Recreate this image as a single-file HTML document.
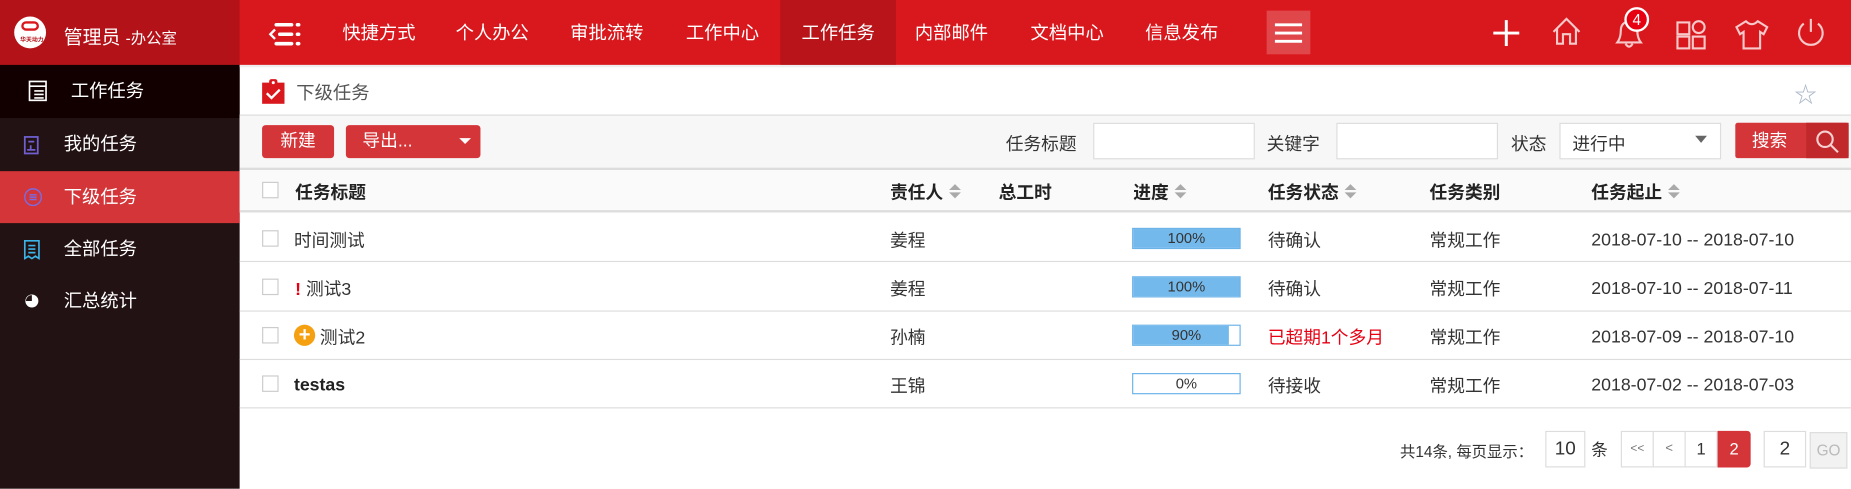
<!DOCTYPE html>
<html><head><meta charset="utf-8">
<style>
*{box-sizing:border-box;margin:0;padding:0}
html,body{width:1851px;height:489px;overflow:hidden;background:#fff}
#w{position:absolute;left:0;top:0;width:1568px;height:414px;transform:scale(1.18048);transform-origin:0 0;font-family:"Liberation Sans","Noto Sans CJK SC",sans-serif;font-size:15px;color:#333}
.a{position:absolute}
.top{left:0;top:0;width:1568px;height:55px;background:#d9181d}
.nav{color:#fff;font-size:15.5px;top:16px}
.side{left:0;top:55px;width:203px;height:359px;background:#231213}
.si{position:absolute;left:0;width:203px;height:44px;color:#fff;font-size:15.5px;line-height:46px;padding-left:54px}
.hd{font-weight:bold;font-size:15px;color:#222;top:152px}
.cb{width:14px;height:14px;border:1px solid #ccc;background:#fff}
.row{left:203px;width:1365px;height:1px;background:#ddd}
.cell{font-size:15px;color:#333}
.dt{margin-top:2px}
.bar{width:92px;height:18px;border:1px solid #6cb3e8;background:#fff;font-size:12.5px;text-align:center;line-height:16px;color:#333}
.bar i{position:absolute;left:0;top:0;bottom:0;background:#74b9ec}
.bar span{position:relative}
.btn{background:#d43539;color:#fff;border-radius:3px;font-size:15px;text-align:center;line-height:28px}
.inp{background:#fff;border:1px solid #ddd;height:31px}
.sort{display:inline-block;width:0;height:0;margin-left:10px;vertical-align:middle;position:relative;top:-2px}
.sort:before{content:"";position:absolute;left:-5px;top:-6px;border:5px solid transparent;border-bottom:5px solid #aaa;border-top:0}
.sort:after{content:"";position:absolute;left:-5px;top:1px;border:5px solid transparent;border-top:5px solid #aaa;border-bottom:0}
.pg{border:1px solid #ddd;background:#fff;height:31px;text-align:center;line-height:29px;font-size:14px}
</style></head><body><div id="w">
<div class="a top"></div>
<div class="a" style="left:0;top:0;width:203px;height:55px;background:#b31218"></div>
<div class="a" style="left:12px;top:14px;width:27px;height:27px;border-radius:50%;background:#fff"></div>
<div class="a" style="left:18px;top:18px;width:15px;height:8px;border:2px solid #d9181d;border-radius:5px"></div>
<div class="a" style="left:17px;top:30px;font-size:5px;color:#b31218;font-weight:bold">华天动力</div>
<div class="a" style="left:54px;top:18px;color:#fff;font-size:16px">管理员 <span style="font-size:13px">-办公室</span></div>
<svg class="a" style="left:227px;top:19px" width="28" height="20"><g stroke="#fff" stroke-width="3" stroke-linecap="round"><line x1="7" y1="2" x2="20" y2="2"/><line x1="25" y1="2" x2="26" y2="2"/><line x1="10" y1="10" x2="20" y2="10"/><line x1="25" y1="10" x2="26" y2="10"/><line x1="7" y1="18" x2="20" y2="18"/><line x1="25" y1="18" x2="26" y2="18"/></g><path d="M6 6 L2 10 L6 14" stroke="#fff" stroke-width="2" fill="none"/></svg>
<div class="a nav" style="left:290px">快捷方式</div>
<div class="a nav" style="left:386px">个人办公</div>
<div class="a nav" style="left:483px">审批流转</div>
<div class="a nav" style="left:581px">工作中心</div>
<div class="a" style="left:661px;top:0;width:98px;height:55px;background:#b8141a"></div>
<div class="a nav" style="left:679px">工作任务</div>
<div class="a nav" style="left:775px">内部邮件</div>
<div class="a nav" style="left:873px">文档中心</div>
<div class="a nav" style="left:970px">信息发布</div>
<div class="a" style="left:1073px;top:9px;width:37px;height:37px;background:#e0474b"></div>
<svg class="a" style="left:1079px;top:19px" width="25" height="18"><g stroke="#fff" stroke-width="2.4"><line x1="1" y1="2" x2="24" y2="2"/><line x1="1" y1="9" x2="24" y2="9"/><line x1="1" y1="16" x2="24" y2="16"/></g></svg>
<svg class="a" style="left:1264px;top:16px" width="24" height="24"><g stroke="#fff" stroke-width="2.5"><line x1="12" y1="1" x2="12" y2="23"/><line x1="1" y1="12" x2="23" y2="12"/></g></svg>
<svg class="a" style="left:1313px;top:13px" width="28" height="28" fill="none" stroke="#f7c9ca" stroke-width="1.8"><path d="M3 14 L14 3 L25 14 M6 11 V24 H11 V16 H17 V24 H22 V11"/></svg>
<svg class="a" style="left:1366px;top:12px" width="28" height="32" fill="none" stroke="#f7c9ca" stroke-width="1.8"><path d="M4 24 Q7 20 7 14 Q7 7 14 6 Q21 7 21 14 Q21 20 24 24 Z M11 25 Q14 30 17 25"/></svg>
<div class="a" style="left:1376px;top:6px;width:21px;height:21px;border-radius:50%;background:#e60012;border:2px solid #fff;color:#fff;font-size:13px;text-align:center;line-height:17px">4</div>
<svg class="a" style="left:1419px;top:13px" width="28" height="30" fill="none" stroke="#f7c9ca" stroke-width="1.8"><rect x="2" y="6" width="10" height="10"/><circle cx="20" cy="10" r="5"/><rect x="2" y="18" width="10" height="10"/><rect x="15" y="18" width="10" height="10"/></svg>
<svg class="a" style="left:1469px;top:13px" width="30" height="30" fill="none" stroke="#f7c9ca" stroke-width="1.8"><path d="M10 5 L2 10 L5 16 L8 14 V28 H22 V14 L25 16 L28 10 L20 5 Q15 10 10 5 Z"/></svg>
<svg class="a" style="left:1520px;top:13px" width="28" height="28" fill="none" stroke="#f7c9ca" stroke-width="1.8"><path d="M8 7 A10 10 0 1 0 20 7"/><line x1="14" y1="3" x2="14" y2="14"/></svg>

<div class="a side"></div>
<div class="si" style="top:55px;height:45px;background:#120000;padding-left:60px;line-height:45px">工作任务</div>
<svg class="a" style="left:24px;top:68px" width="16" height="18" fill="none" stroke="#fff" stroke-width="1.4"><rect x="1" y="1" width="14" height="16"/><line x1="1" y1="5" x2="15" y2="5"/><line x1="5" y1="9" x2="13" y2="9"/><line x1="5" y1="12" x2="13" y2="12"/><line x1="5" y1="15" x2="13" y2="15"/></svg>
<div class="si" style="top:100px">我的任务</div>
<svg class="a" style="left:20px;top:115px" width="13" height="16" fill="none" stroke="#6f5fd0" stroke-width="1.5"><rect x="1" y="1" width="11" height="14"/><line x1="4" y1="5" x2="9" y2="5"/><line x1="6" y1="8" x2="6" y2="12"/><line x1="3" y1="12" x2="10" y2="12"/></svg>
<div class="si" style="top:145px;background:#d43539">下级任务</div>
<svg class="a" style="left:20px;top:159px" width="16" height="16" fill="none" stroke="#7b6be0" stroke-width="1.2"><circle cx="8" cy="8" r="7"/><line x1="5" y1="6" x2="11" y2="6"/><line x1="5" y1="8" x2="11" y2="8"/><line x1="5" y1="10" x2="11" y2="10"/></svg>
<div class="si" style="top:189px">全部任务</div>
<svg class="a" style="left:20px;top:203px" width="14" height="17" fill="none" stroke="#3bb4e8" stroke-width="1.4"><path d="M1 1 H13 V16 L10 14 L7 16 L4 14 L1 16 Z"/><line x1="4" y1="5" x2="10" y2="5"/><line x1="4" y1="8" x2="10" y2="8"/><line x1="4" y1="11" x2="10" y2="11"/></svg>
<div class="si" style="top:233px">汇总统计</div>
<svg class="a" style="left:21px;top:249px" width="12" height="12"><circle cx="6" cy="6" r="5.5" fill="#fff"/><path d="M6 6 V1 A5 5 0 0 0 1 6 Z" fill="#231213"/></svg>

<div class="a" style="left:203px;top:55px;width:1365px;height:2px;background:#eee"></div>
<svg class="a" style="left:222px;top:66px" width="19" height="22"><rect x="0" y="4" width="19" height="18" fill="#d9181d"/><rect x="6" y="1" width="7" height="6" rx="2" fill="#d9181d"/><circle cx="9.5" cy="4" r="1.3" fill="#fff"/><path d="M4 13 L8 17 L15 10" stroke="#fff" stroke-width="2" fill="none"/></svg>
<div class="a" style="left:251px;top:67px;font-size:15.5px;color:#555">下级任务</div>
<div class="a" style="left:1520px;top:66px;font-size:19px;color:#a9b7c8">☆</div>
<div class="a" style="left:203px;top:97px;width:1365px;height:45px;background:#f7f7f7;border-top:1px solid #ddd"></div>
<div class="a btn" style="left:222px;top:106px;width:61px;height:28px">新建</div>
<div class="a btn" style="left:293px;top:106px;width:114px;height:28px;text-align:left;padding-left:14px">导出...</div>
<div class="a" style="left:389px;top:117px;border:5px solid transparent;border-top:5px solid #fff"></div>
<div class="a" style="left:852px;top:111px">任务标题</div>
<div class="a inp" style="left:926px;top:104px;width:137px"></div>
<div class="a" style="left:1073px;top:111px">关键字</div>
<div class="a inp" style="left:1132px;top:104px;width:137px"></div>
<div class="a" style="left:1280px;top:111px">状态</div>
<div class="a inp" style="left:1321px;top:104px;width:137px;padding:6px 0 0 10px">进行中</div>
<div class="a" style="left:1436px;top:115px;border:5px solid transparent;border-top:6px solid #666"></div>
<div class="a btn" style="left:1470px;top:104px;width:96px;height:30px;line-height:32px;text-align:left;padding-left:14px;border-radius:2px">搜索</div>
<div class="a" style="left:1530px;top:104px;width:36px;height:30px;background:#c0282c"></div>
<svg class="a" style="left:1538px;top:110px" width="20" height="20" fill="none" stroke="#f7d0d0" stroke-width="1.8"><circle cx="8" cy="8" r="6.5"/><line x1="13" y1="13" x2="19" y2="19"/></svg>
<div class="a" style="left:203px;top:142px;width:1365px;height:38px;background:#fafafa;border-top:2px solid #ddd;border-bottom:2px solid #ddd"></div>
<div class="a cb" style="left:222px;top:154px"></div>
<div class="a hd" style="left:250px">任务标题</div>
<div class="a hd" style="left:754px">责任人<span class="sort"></span></div>
<div class="a hd" style="left:846px">总工时</div>
<div class="a hd" style="left:960px">进度<span class="sort"></span></div>
<div class="a hd" style="left:1074px">任务状态<span class="sort"></span></div>
<div class="a hd" style="left:1211px">任务类别</div>
<div class="a hd" style="left:1348px">任务起止<span class="sort"></span></div>

<div class="a row" style="top:221px"></div><div class="a row" style="top:263px"></div><div class="a row" style="top:304px"></div><div class="a row" style="top:345px"></div>

<div class="a cb" style="left:222px;top:195px"></div>
<div class="a cell" style="left:249px;top:193px">时间测试</div>
<div class="a cell" style="left:754px;top:193px">姜程</div>
<div class="a bar" style="left:959px;top:193px"><i style="width:100%"></i><span>100%</span></div>
<div class="a cell" style="left:1074px;top:193px">待确认</div>
<div class="a cell" style="left:1211px;top:193px">常规工作</div>
<div class="a cell dt" style="left:1348px;top:193px">2018-07-10 -- 2018-07-10</div>

<div class="a cb" style="left:222px;top:236px"></div>
<div class="a cell" style="left:250px;top:234px"><b style="color:#e60012">!</b> 测试3</div>
<div class="a cell" style="left:754px;top:234px">姜程</div>
<div class="a bar" style="left:959px;top:234px"><i style="width:100%"></i><span>100%</span></div>
<div class="a cell" style="left:1074px;top:234px">待确认</div>
<div class="a cell" style="left:1211px;top:234px">常规工作</div>
<div class="a cell dt" style="left:1348px;top:234px">2018-07-10 -- 2018-07-11</div>

<div class="a cb" style="left:222px;top:277px"></div>
<div class="a" style="left:249px;top:275px;width:18px;height:18px;border-radius:50%;background:#f5a010;color:#fff;font-weight:bold;text-align:center;line-height:18px;font-size:17px">+</div>
<div class="a cell" style="left:271px;top:275px">测试2</div>
<div class="a cell" style="left:754px;top:275px">孙楠</div>
<div class="a bar" style="left:959px;top:275px"><i style="width:90%"></i><span>90%</span></div>
<div class="a cell" style="left:1074px;top:275px;color:#e60012">已超期1个多月</div>
<div class="a cell" style="left:1211px;top:275px">常规工作</div>
<div class="a cell dt" style="left:1348px;top:275px">2018-07-09 -- 2018-07-10</div>

<div class="a cb" style="left:222px;top:318px"></div>
<div class="a cell dt" style="left:249px;top:316px;font-weight:bold;color:#222">testas</div>
<div class="a cell" style="left:754px;top:316px">王锦</div>
<div class="a bar" style="left:959px;top:316px"><span>0%</span></div>
<div class="a cell" style="left:1074px;top:316px">待接收</div>
<div class="a cell" style="left:1211px;top:316px">常规工作</div>
<div class="a cell dt" style="left:1348px;top:316px">2018-07-02 -- 2018-07-03</div>

<div class="a" style="left:1186px;top:372px;font-size:13px;color:#333">共14条, 每页显示：</div>
<div class="a pg" style="left:1309px;top:365px;width:34px;font-size:16px">10</div>
<div class="a" style="left:1348px;top:371px;font-size:14px">条</div>
<div class="a pg" style="left:1373px;top:365px;width:28px;font-size:10px;color:#777">&lt;&lt;</div>
<div class="a pg" style="left:1400px;top:365px;width:28px;font-size:11px;color:#777">&lt;</div>
<div class="a pg" style="left:1427px;top:365px;width:28px">1</div>
<div class="a pg" style="left:1455px;top:365px;width:28px;background:#d43539;border-color:#d43539;color:#fff;border-radius:0 3px 3px 0">2</div>
<div class="a pg" style="left:1494px;top:365px;width:36px;font-size:16px">2</div>
<div class="a pg" style="left:1533px;top:366px;width:32px;background:#f2f2f2;color:#bbb;font-size:13px">GO</div>
</div></body></html>
